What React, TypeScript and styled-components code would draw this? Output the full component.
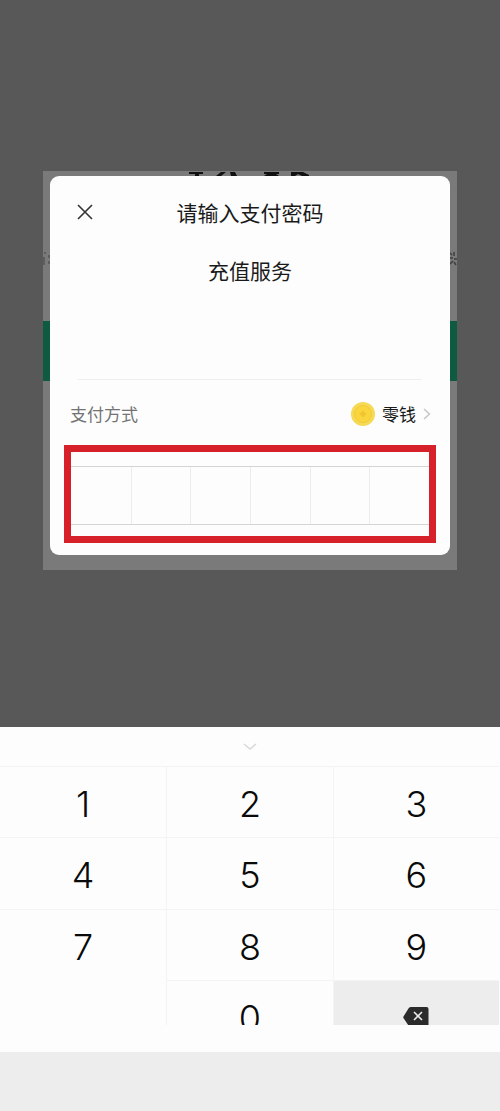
import React, { useState } from "react";
import styled, { createGlobalStyle } from "styled-components";

const cjk = '"Noto Sans CJK SC", sans-serif';

const GlobalStyle = createGlobalStyle`
  *, *::before, *::after { box-sizing: border-box; }
  body { margin: 0; background: #ededed; font-family: ${cjk}; color: #1a1a1a; }
  button { border: 0; padding: 0; background: none; font: inherit; color: inherit; cursor: pointer; }
`;

const Page = styled.div`
  display: flex;
  flex-direction: column;
  min-height: 100vh;
`;

const Overlay = styled.main`
  padding: 171px 43px 157px;
  background: #585858;
`;

const DimmedPage = styled.div`
  position: relative;
  padding: 5px 7px 15px;
  background: #7a7a7a;
  overflow: hidden;
`;

const DimmedAmount = styled.svg`
  position: absolute;
  top: 0;
  left: 50%;
  width: 124px;
  height: 5px;
  margin-left: -62px;
`;

const DimmedBand = styled.div`
  position: absolute;
  top: 150px;
  left: 0;
  right: 0;
  height: 60px;
  background: #0f5b42;
`;

const DimmedLine = styled.svg<{ $side: "left" | "right" }>`
  position: absolute;
  top: 80px;
  ${(p) => p.$side}: 0;
  width: 8px;
  height: 16px;
`;

const Dialog = styled.section`
  position: relative;
  padding: 20px 14px 12px;
  border-radius: 9px;
  background: #fdfdfd;
`;

const DialogHeader = styled.header`
  display: grid;
  grid-template-columns: 42px 1fr 42px;
  align-items: center;
  height: 30px;
`;

const CloseButton = styled.button`
  display: flex;
  align-items: center;
  justify-content: center;
  height: 32px;
`;

const Title = styled.h1`
  margin: 0;
  font-size: 21px;
  line-height: 30px;
  font-weight: 400;
  text-align: center;
`;

const Service = styled.p`
  margin: 0 14px;
  padding: 29px 0 94px;
  border-bottom: 1px solid #efefef;
  font-size: 21px;
  line-height: 30px;
  text-align: center;
`;

const MethodRow = styled.div`
  display: flex;
  align-items: center;
  justify-content: space-between;
  height: 65px;
  padding: 2px 5px 0 6px;
  font-size: 17px;
  line-height: 24px;
`;

const MethodLabel = styled.span`
  color: #737373;
`;

const MethodButton = styled.button`
  display: flex;
  align-items: center;
  gap: 7px;
`;

const PasswordFrame = styled.label`
  display: block;
  padding: 14px 0 11px;
  border: 7px solid #d6202a;
`;

const PasswordCells = styled.span`
  position: relative;
  display: grid;
  grid-template-columns: repeat(6, 1fr);
  height: 59px;
  border: solid #d4d4d4;
  border-width: 1px 0;
`;

const Cell = styled.span`
  display: flex;
  align-items: center;
  justify-content: center;
  font-size: 21px;
  & + & { border-left: 1px solid #ececec; }
`;

const PasswordInput = styled.input`
  position: absolute;
  inset: 0;
  width: 100%;
  border: 0;
  opacity: 0;
`;

const Keyboard = styled.section`
  padding-bottom: 27px;
  background: #fdfdfd;
`;

const CollapseButton = styled.button`
  display: flex;
  align-items: center;
  justify-content: center;
  width: 100%;
  height: 39px;
`;

const Keys = styled.div`
  display: grid;
  grid-template-columns: repeat(3, 1fr);
  grid-template-rows: 71px 72px 71px 45px;
  padding-right: 1px;
  overflow: hidden;
`;

const Key = styled.button<{ $shaded?: boolean }>`
  display: flex;
  align-items: center;
  justify-content: center;
  height: 72px;
  padding-top: ${(p) => (p.$shaded ? "0" : "2px")};
  border-top: 1px solid #f4f4f4;
  font-family: Inter, sans-serif;
  font-size: 36px;
  font-weight: 300;
  line-height: 70px;
  color: #0a0a0a;
  background: ${(p) => (p.$shaded ? "#ededed" : "transparent")};
  &:not(:nth-child(3n + 1)) { border-left: 1px solid #f4f4f4; }
`;

const EmptyKey = styled.span``;

const CloseIcon = () => (
  <svg width="16" height="16" viewBox="0 0 16 16" fill="none" stroke="#333" strokeWidth="1.6">
    <path d="M1 1l14 14M15 1L1 15" />
  </svg>
);

const CoinIcon = () => (
  <svg width="24" height="24" viewBox="0 0 24 24">
    <circle cx="12" cy="12" r="12" fill="#f6d955" />
    <circle cx="12" cy="12" r="8.5" fill="#fad53c" stroke="#f0ca40" />
    <path d="M12 8.5l3.5 3.5-3.5 3.5L8.5 12z" fill="#f0c433" />
  </svg>
);

const ChevronRight = () => (
  <svg width="8" height="12" viewBox="0 0 8 12" fill="none" stroke="#c4c4c4" strokeWidth="1.4">
    <path d="M1 1l5.5 5L1 11" />
  </svg>
);

const ChevronDown = () => (
  <svg width="14" height="8" viewBox="0 0 14 8" fill="none" stroke="#d9d9d9" strokeWidth="1.5">
    <path d="M1 1l6 5 6-5" />
  </svg>
);

const BackspaceIcon = () => (
  <svg width="26" height="20" viewBox="0 0 26 20">
    <path d="M8 0h15.5a2 2 0 0 1 2 2v16a2 2 0 0 1-2 2H8a3 3 0 0 1-2.2-1L.8 11.500a2 2 0 0 1 0-2.600L5.800 1A3 3 0 0 1 8 0z" fill="#2b2b2b" />
    <path d="M11 5l8 8M19 5l-8 8" stroke="#ededed" strokeWidth="1.6" />
  </svg>
);

export default function App() {
  const [password, setPassword] = useState("");
  const press = (digit: string) => setPassword((p) => (p + digit).slice(0, 6));

  return (
    <Page>
      <GlobalStyle />
      <Overlay>
        <DimmedPage>
          <DimmedAmount viewBox="0 0 124 5" aria-hidden="true">
            <path d="M1 1h14v2h-4v2H7V3H1zM33 1h5l-5 4h-5zM42 1h5l2 4h-6zM76 1h15v2h-3l3 2H76l3-2h-3zM103 1h12l6 3v1h-7l-4-2-3 2h-4z" fill="#111" />
          </DimmedAmount>
          <DimmedLine $side="left" viewBox="0 0 8 16" aria-hidden="true">
            <path d="M1 2h2M1 6v8M6 4v3M6 10v3" stroke="#555" strokeWidth="1.5" />
          </DimmedLine>
          <DimmedLine $side="right" viewBox="0 0 8 16" aria-hidden="true">
            <path d="M1 2l2 2M5 1v4M0 7h4M5 8h3M1 13l3-3M5 11l2 3" stroke="#3f3f3f" strokeWidth="1.5" />
          </DimmedLine>
          <DimmedBand />
          <Dialog role="dialog" aria-labelledby="pay-title">
            <DialogHeader>
              <CloseButton aria-label="关闭">
                <CloseIcon />
              </CloseButton>
              <Title id="pay-title">请输入支付密码</Title>
            </DialogHeader>
            <Service>充值服务</Service>
            <MethodRow>
              <MethodLabel>支付方式</MethodLabel>
              <MethodButton>
                <CoinIcon />
                零钱
                <ChevronRight />
              </MethodButton>
            </MethodRow>
            <PasswordFrame>
              <PasswordCells>
                {[0, 1, 2, 3, 4, 5].map((i) => (
                  <Cell key={i}>{i < password.length ? "●" : ""}</Cell>
                ))}
                <PasswordInput
                  type="password"
                  aria-label="支付密码"
                  inputMode="numeric"
                  maxLength={6}
                  value={password}
                  onChange={(e) => setPassword(e.target.value)}
                />
              </PasswordCells>
            </PasswordFrame>
          </Dialog>
        </DimmedPage>
      </Overlay>
      <Keyboard>
        <CollapseButton aria-label="收起键盘">
          <ChevronDown />
        </CollapseButton>
        <Keys>
          {["1", "2", "3", "4", "5", "6", "7", "8", "9"].map((d) => (
            <Key key={d} onClick={() => press(d)}>
              {d}
            </Key>
          ))}
          <EmptyKey />
          <Key onClick={() => press("0")}>0</Key>
          <Key $shaded aria-label="删除" onClick={() => setPassword((p) => p.slice(0, -1))}>
            <BackspaceIcon />
          </Key>
        </Keys>
      </Keyboard>
    </Page>
  );
}
